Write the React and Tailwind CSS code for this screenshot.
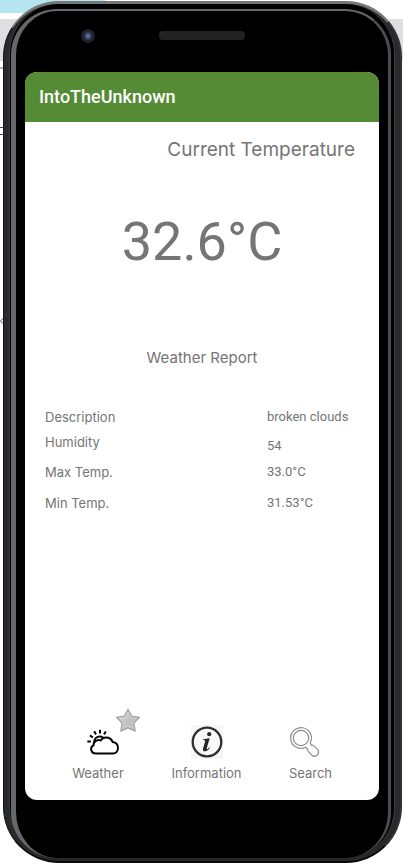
const report = [
  { label: "Description", value: "broken clouds", row: "h-[31px]", th: "align-middle", td: "align-middle" },
  { label: "Humidity", value: "54", row: "h-6", th: "align-top", td: "align-bottom" },
  { label: "Max Temp.", value: "33.0°C", row: "h-[31px]", th: "align-middle", td: "align-middle" },
  { label: "Min Temp.", value: "31.53°C", row: "h-[31px]", th: "align-middle", td: "align-middle" },
];

function WeatherIcon() {
  return (
    <svg width="32" height="26" viewBox="0 0 32 26" fill="none" stroke="#050505" strokeWidth="2" aria-hidden="true">
      <path d="M9 24.500h17c3.100 0 5-2.400 5-5.400 0-3.400-2.300-5.700-5.300-6.100-1.200-2.800-3.500-4.400-6.500-4.400-2.300 0-4.200 1.100-5.400 2.900-1.300-.6-2.900-.6-4.300.1-2 .9-3.100 2.700-3 4.700-1.600.8-2.500 2-2.400 3.600.1 2.600 2 4.600 4.900 4.600z" strokeLinejoin="round" />
      <path d="M7.200 13.600C7 10 9.600 7.400 12.800 7.400c1.300 0 2.400.4 3.200 1.100" />
      <path d="M13 .800v3.600M7.200 2.200l1.800 3.200M2.900 6.400l3 2.100M.3 12.400h3.600M18.700 2.500l-1.700 2.900" />
    </svg>
  );
}

function InfoIcon() {
  return (
    <svg width="32" height="34" viewBox="0 0 32 34" aria-hidden="true">
      <rect width="32" height="34" fill="#f6f6f6" />
      <circle cx="16" cy="17" r="14.300" fill="#f8f8f8" stroke="#2f2f2f" strokeWidth="2.300" />
      <circle cx="18.200" cy="9.200" r="2.100" fill="#252525" />
      <path d="M12.200 14.300l6.500-1-2.900 9.800c-.3 1-.1 1.300.3 1.200.7-.2 1.400-1.100 2.100-2.100l.7.500c-1.300 2.100-2.900 3.600-4.900 3.600-1.800 0-2.500-1.200-1.900-3.100l2-6.600c.3-1-.1-1.400-1.900-1.500z" fill="#252525" />
    </svg>
  );
}

function SearchIcon() {
  return (
    <svg width="30" height="30" viewBox="0 0 30 30" fill="none" stroke="#8d8d8d" strokeWidth="1.200" aria-hidden="true">
      <path d="M20.300 15.700a10.400 10.400 0 1 0-4.600 4.600l2 2c-.2.900.1 1.600.7 2.300l3.600 3.700c3.500 3 8.600-1.800 5.600-5.600l-3.800-3.800c-.6-.6-1.500-.9-2.300-.7z" />
      <circle cx="11" cy="11" r="7.700" />
    </svg>
  );
}

function StarIcon() {
  return (
    <svg width="26" height="25" viewBox="0 0 26 25" aria-hidden="true">
      <defs>
        <linearGradient id="starFill" x1="0" y1="0" x2="1" y2="1">
          <stop offset="0" stopColor="#dedede" />
          <stop offset="0.5" stopColor="#c4c4c4" />
          <stop offset="1" stopColor="#b0b0b0" />
        </linearGradient>
      </defs>
      <path d="M13 1.500l3.700 6.800 7.600 1.200-5.500 5.500 1.300 8-7.100-3.200-7.100 3.200 1.300-8-5.500-5.500 7.600-1.200z" fill="url(#starFill)" stroke="#a6a6a6" strokeWidth="1.500" strokeLinejoin="round" />
      <path d="M13 4l2.800 5.400 5.900 1-4.300 4.100 1 6-5.400-2.500-5.400 2.500 1-6-4.300-4.100 5.900-1z" fill="none" stroke="#d8d8d8" strokeWidth="0.800" />
    </svg>
  );
}

const tabs = [
  { label: "Weather", Icon: WeatherIcon, favourite: true, width: "w-[54px]", align: "justify-end pr-1.5" },
  { label: "Information", Icon: InfoIcon, width: "w-[75px]", align: "justify-center" },
  { label: "Search", Icon: SearchIcon, width: "w-[45px]", align: "justify-start pl-0.5" },
];

function Screen() {
  return (
    <div className="flex flex-1 flex-col overflow-hidden rounded-xl bg-white text-[#757575]">
      <header className="flex h-[50px] items-center bg-[#568b35] px-3.5 font-[Roboto,sans-serif]">
        <h1 className="text-lg font-medium text-white">IntoTheUnknown</h1>
      </header>
      <main className="flex flex-1 flex-col font-[Inter,sans-serif]">
        <h2 className="pt-3.5 pr-6 text-right text-[19px] leading-7">Current Temperature</h2>
        <p className="pt-11 text-center font-[Roboto,sans-serif] text-[54px] leading-[68px]">32.6°C</p>
        <h2 className="pt-[72px] text-center text-[15px] leading-5">Weather Report</h2>
        <table className="mx-5 mt-[33px] table-fixed text-left">
          <tbody>
            {report.map((r) => (
              <tr key={r.label} className={r.row}>
                <th scope="row" className={`p-0 text-[13px] leading-5 font-normal ${r.th}`}>{r.label}</th>
                <td className={`w-[92px] p-0 font-[Roboto,sans-serif] text-[13px] leading-5 ${r.td}`}>{r.value}</td>
              </tr>
            ))}
          </tbody>
        </table>
      </main>
      <nav className="flex justify-center gap-11 pb-[17px] font-[Inter,sans-serif]">
        {tabs.map(({ label, Icon, favourite, width, align }) => (
          <button key={label} type="button" className={`relative flex flex-col items-center gap-[3px] text-[13px] leading-5 ${width}`}>
            <span className={`flex h-9 w-full items-center ${align}`}>
              <Icon />
            </span>
            {label}
            {favourite && (
              <span className="absolute -top-4 -right-4">
                <StarIcon />
              </span>
            )}
          </button>
        ))}
      </nav>
    </div>
  );
}

export default function App() {
  return (
    <div className="relative flex min-h-screen flex-col bg-white">
      <div className="absolute inset-x-0 top-0" aria-hidden="true">
        <div className="h-[13px] w-[105px] bg-[#b4e5f0]" />
        <div className="mt-1.5 h-[42px] bg-[#dfdfe1]" />
        <div className="mt-1.5 h-0.5 w-1 bg-[#b5b5b5]" />
        <div className="mt-[58px] h-2 w-1 border-y border-[#444]" />
        <svg className="mt-[182px]" width="4" height="8" viewBox="0 0 4 8" fill="none" stroke="#555">
          <path d="M4 0.500L0.500 4L4 7.500" />
        </svg>
      </div>
      <div className="relative mt-px mr-px mb-[3px] ml-[3px] flex flex-1 flex-col rounded-[56px] border-t-[3px] border-r-2 border-b-2 border-l border-t-[#777] border-r-[#333] border-b-[#0a0a0a] border-l-[#151515] bg-[#28292a] pr-[5px] pb-[3px] pl-[5px]">
        <div className="flex flex-1 flex-col rounded-[50px] border-r border-l border-r-[#3c3d3d] border-l-[#3c3d3f] bg-black pt-[5px] pr-[3px] pl-px">
          <div className="flex flex-1 flex-col rounded-[46px] border-t-2 border-r-[3px] border-l-[5px] border-t-[#66676a] border-r-[#4b4c4d] border-l-[#66686d] bg-black pr-[9px] pb-[58px] pl-[9px]">
            <div className="grid h-[61px] grid-cols-[1fr_86px_1fr] items-start pt-[18px]">
              <div className="pl-14">
                <span className="flex size-3.5 items-center justify-center rounded-full bg-[#20222b]">
                  <span className="size-2 rounded-full border-2 border-[#343c62] bg-[#6675a5]" />
                </span>
              </div>
              <div className="mt-0.5 h-[9px] rounded bg-[#222]" />
            </div>
            <Screen />
          </div>
        </div>
      </div>
    </div>
  );
}
